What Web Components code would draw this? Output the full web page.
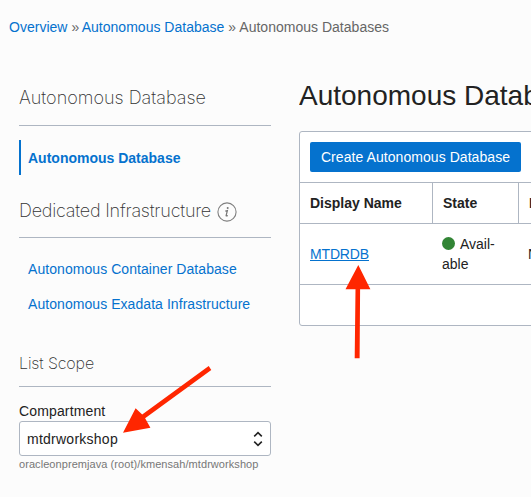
<!DOCTYPE html>
<html lang="en"><head><meta charset="utf-8"><title>Autonomous Databases</title>
<style>
html,body{margin:0;height:100%;overflow:hidden;background:#fcfcfc}
body{font:14px/20px "Liberation Sans",Arial,sans-serif;color:#222}
</style></head><body>
<console-page></console-page>
<script>
function define(name, html){
  const t=document.createElement('template');
  t.innerHTML='<style>*{box-sizing:border-box}</style>'+html;
  customElements.define(name, class extends HTMLElement{
    constructor(){super();this.attachShadow({mode:'open'}).append(t.content.cloneNode(true));}
  });
}
define('nav-crumbs',`<style>:host{display:block;height:55px;padding:17px 0 0 9px;white-space:nowrap;color:#666;letter-spacing:.015px}
a{color:#0572ce}i{font-style:normal}i:first-of-type{letter-spacing:-.6px}</style>
<a>Overview</a> <i>»</i> <a>Autonomous Database</a> <i>»</i> <span>Autonomous Databases</span>`);
define('side-heading',`<style>:host{display:flex;align-items:center;gap:6px;border-bottom:1px solid #aeb6c2;color:#333;font:200 18px/24px Inter,"Liberation Sans",sans-serif;white-space:nowrap}</style><slot></slot>`);
define('info-icon',`<style>:host{display:block;width:20px;height:20px;position:relative;top:1px}svg{display:block}</style>
<svg width="20" height="20" viewBox="0 0 20 20"><circle cx="10" cy="10" r="9.1" fill="none" stroke="#808080" stroke-width="1.1"/><circle cx="10.7" cy="6" r="1" fill="#777"/><path d="M8.3 9.1 10.4 8.5 9.1 13.6Q9 14.5 10.8 13.4" fill="none" stroke="#777" stroke-width="1.2"/></svg>`);
define('side-link',`<style>:host{display:flex;align-items:center;height:35px;padding-left:9px;color:#0572ce;white-space:nowrap;letter-spacing:.06px}
:host([active]){border-left:2px solid #0572ce;padding-left:7px;font-weight:bold;letter-spacing:0}</style><slot></slot>`);
define('scope-select',`<style>:host{display:block}label{display:block;height:20px;letter-spacing:.14px}
.box{height:35px;border:1px solid #aeb6c2;border-radius:3px;background:#fff;padding:0 7px;display:flex;align-items:center;justify-content:space-between}
.value{letter-spacing:.25px}
.path{font-size:11px;line-height:16px;color:#777;white-space:nowrap;letter-spacing:.065px}</style>
<label>Compartment</label><div class="box"><span class="value">mtdrworkshop</span>
<svg width="10" height="16" viewBox="0 0 10 16" fill="none" stroke="#222" stroke-width="1.6"><path d="M1.2 5.3 5 1.7 8.8 5.3M1.2 10.7 5 14.3 8.8 10.7"/></svg></div><div class="path">oracleonpremjava (root)/kmensah/mtdrworkshop</div>`);
define('side-nav',`<style>:host{display:block;width:252px}side-link[active]{margin-top:14px}
.a{height:41px;padding-bottom:14px;margin-top:30px}.b{height:41px;padding-bottom:13px;margin-top:22px}.links{margin-top:13px}.c{height:37px;padding-bottom:11px;margin-top:29px;font-size:16px}
scope-select{margin-top:14px}.b span{letter-spacing:-.22px}.c span{letter-spacing:-.12px}</style>
<side-heading class="a"><span>Autonomous Database</span></side-heading><side-link active>Autonomous Database</side-link>
<side-heading class="b"><span>Dedicated Infrastructure</span><info-icon></info-icon></side-heading>
<div class="links"><side-link>Autonomous Container Database</side-link><side-link>Autonomous Exadata Infrastructure</side-link></div>
<side-heading class="c"><span>List Scope</span></side-heading><scope-select></scope-select>`);
define('action-button',`<style>:host{display:flex;align-items:center;justify-content:center;width:211px;height:30px;border-radius:2px;background:#0572ce;color:#fff;white-space:nowrap;letter-spacing:.06px}</style><slot></slot>`);
define('db-table',`<style>:host{display:block;width:300px;height:195px;border:1px solid #aeb6c2;border-radius:3px;background:#fff}
.bar{height:50px;padding:10px}.row{display:grid;grid-template-columns:132px 86px 80px;border-top:1px solid #aeb6c2}
.row>div{padding:10px;display:flex;align-items:center}.head{height:41px;font-weight:bold}.head>div+div{border-left:1px solid #aeb6c2}
.data{height:61px}.foot{border-top:1px solid #aeb6c2}a{color:#0572ce;text-decoration:underline;letter-spacing:-.15px}
.dot{display:inline-block;width:13px;height:13px;border-radius:50%;background:#328535;margin-right:5px;vertical-align:-1px}</style>
<div class="bar"><action-button>Create Autonomous Database</action-button></div>
<div class="row head"><div>Display Name</div><div>State</div><div>D</div></div>
<div class="row data"><div><a>MTDRDB</a></div><div><span><span class="dot"></span>Avail-<br>able</span></div><div>N</div></div><div class="foot"></div>`);
define('db-list',`<style>:host{display:block;min-width:0;overflow:hidden}h1{margin:21px 0 15px;font:400 28px/40px "Liberation Sans",Arial,sans-serif;white-space:nowrap}</style><h1>Autonomous Databases</h1><db-table></db-table>`);
define('pointer-arrows',`<style>:host{position:absolute;inset:0;pointer-events:none}svg{display:block}</style>
<svg width="531" height="497" fill="#ff2600"><path d="M208.7 366 211.3 370 145.1 418.2 150.4 427.7 123 432.8 135.6 408.2 142.2 414.5Z"/><path d="M358.3 265 370.4 289.3 360.1 289.2 359.6 358.2 354.7 358.2 355.5 289.2 345.5 289.2Z"/></svg>`);
define('console-page',`<style>:host{display:block;position:relative;width:531px;height:497px;overflow:hidden}
main{display:grid;grid-template-columns:252px 1fr;column-gap:28px;padding-left:19px}</style>
<nav-crumbs></nav-crumbs><main><side-nav></side-nav><db-list></db-list></main><pointer-arrows></pointer-arrows>`);
</script></body></html>
